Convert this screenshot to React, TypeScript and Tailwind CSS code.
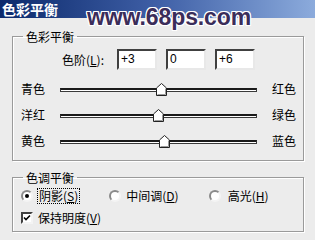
import React from "react";

const cjk = "font-['SimSun','Noto_Sans_CJK_SC',sans-serif]";

const sliders = [
  { left: "青色", right: "红色", pos: 101 },
  { left: "洋红", right: "绿色", pos: 98 },
  { left: "黄色", right: "蓝色", pos: 104 },
];

function Thumb() {
  return (
    <svg width="11" height="13" viewBox="0 0 11 13" className="block">
      <path d="M5.5 0.5 L10.5 5 L10.5 12.5 L0.5 12.5 L0.5 5 Z" fill="#fff" stroke="#222" />
      <path d="M9.5 5.5 L9.5 11.5 L1.5 11.5" fill="none" stroke="#9a9a9a" />
    </svg>
  );
}

function Slider({ pos }: { pos: number }) {
  return (
    <div className="relative w-[197px] h-[13px]">
      <div className="absolute left-0 right-0 top-[5px] h-[4px] bg-white border-t-2 border-t-[#1a1a1a] border-b border-b-[#3a3a3a] border-x border-x-[#3a3a3a]" />
      <div className="absolute top-0" style={{ left: pos - 5 }}>
        <Thumb />
      </div>
    </div>
  );
}

function NumBox({ value }: { value: string }) {
  return (
    <div className="w-[40px] h-[21px] bg-white border-2 border-t-[#404040] border-l-[#404040] border-r-[#e8e8e8] border-b-[#e8e8e8] pl-[2px] text-[12px] leading-[17px] text-black font-['Liberation_Sans',sans-serif]">
      {value}
    </div>
  );
}

function Radio({ checked }: { checked?: boolean }) {
  return (
    <div className="w-[12px] h-[12px] rounded-full bg-white border-2 border-t-[#8a8a8a] border-l-[#8a8a8a] border-r-[#f4f4f4] border-b-[#f4f4f4] flex items-center justify-center">
      {checked && <div className="w-[4px] h-[4px] rounded-full bg-black" />}
    </div>
  );
}

export default function App() {
  return (
    <div className={`relative w-[315px] h-[240px] overflow-hidden bg-[#ececec] text-black ${cjk}`}>
      {/* title bar */}
      <div className="h-[18px] bg-gradient-to-r from-[#0c2a6c] via-[#3f5fa6] to-[#8cabdc] px-[2px] flex items-center">
        <span className="text-white font-bold text-[14px] leading-[15px]">色彩平衡</span>
      </div>

      {/* watermark */}
      <div className="absolute left-[87px] top-[4px] text-[23px] leading-[26px] font-bold tracking-[-0.1px] text-[#3b2d5a] font-['Liberation_Sans',sans-serif] [text-shadow:1px_1px_0_#fff,-1px_-1px_0_#fff,1px_-1px_0_#fff,-1px_1px_0_#fff,0_1px_0_#fff,0_-1px_0_#fff,1px_0_0_#fff,-1px_0_0_#fff]">
        www.68ps.com
      </div>

      <div className="px-[12px] pt-[12px] flex flex-col gap-[10px]">
        {/* color balance group */}
        <fieldset className="h-[131px] w-[292px] border border-[#9a9a9a] shadow-[inset_1px_1px_0_#fff,1px_1px_0_#fff] px-0 pb-0">
          <legend className="ml-[10px] px-[3px] text-[12px] leading-[13px]">色彩平衡</legend>
          <div className="flex items-center mt-[6px] pl-[49px] gap-[9px] text-[12px]">
            <span className="leading-[14px] mr-[-8px]">
              色阶(<span className="underline">L</span>):
            </span>
            <span className="w-[3px]" />
            <NumBox value="+3" />
            <NumBox value="0" />
            <NumBox value="+6" />
          </div>
          <div className="flex flex-col gap-[12px] mt-[12px]">
            {sliders.map((s) => (
              <div key={s.left} className="flex items-center text-[12px] leading-[14px]">
                <span className="w-[47px] pl-[8px]">{s.left}</span>
                <Slider pos={s.pos} />
                <span className="ml-[15px]">{s.right}</span>
              </div>
            ))}
          </div>
        </fieldset>

        {/* tone balance group */}
        <fieldset className="h-[61px] w-[292px] border border-[#9a9a9a] shadow-[inset_1px_1px_0_#fff,1px_1px_0_#fff] px-0 pb-0">
          <legend className="ml-[10px] px-[3px] text-[12px] leading-[13px]">色调平衡</legend>
          <div className="flex items-center mt-[4px] pl-[8px] text-[12px] leading-[14px]">
            <Radio checked />
            <span className="ml-[4px] px-[1px] border border-dotted border-black">
              阴影(<span className="underline">S</span>)
            </span>
            <span className="w-[29px]" />
            <Radio />
            <span className="ml-[5px]">
              中间调(<span className="underline">D</span>)
            </span>
            <span className="w-[30px]" />
            <Radio />
            <span className="ml-[7px]">
              高光(<span className="underline">H</span>)
            </span>
          </div>
          <div className="flex items-center mt-[7px] pl-[8px] text-[12px] leading-[14px]">
            <div className="w-[12px] h-[12px] bg-white border-2 border-t-[#404040] border-l-[#404040] border-r-[#f4f4f4] border-b-[#f4f4f4] flex items-center justify-center">
              <svg width="8" height="8" viewBox="0 0 8 8">
                <path d="M1 3.5 L3 5.5 L7 1.5" fill="none" stroke="#000" strokeWidth="1.6" />
              </svg>
            </div>
            <span className="ml-[5px]">
              保持明度(<span className="underline">V</span>)
            </span>
          </div>
        </fieldset>
      </div>
    </div>
  );
}
